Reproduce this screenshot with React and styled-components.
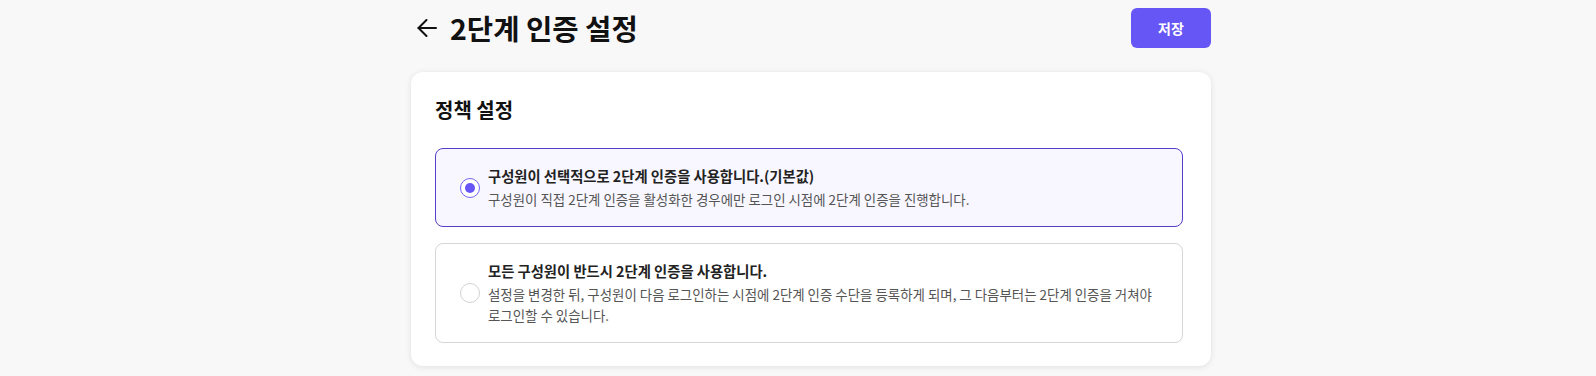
import React, { useState } from "react";
import styled, { createGlobalStyle } from "styled-components";

const Global = createGlobalStyle`
  html, body { margin: 0; padding: 0; background: #f8f8f9; }
  body { font-family: "Noto Sans CJK KR", "Noto Sans", sans-serif; color: #1a1a1a; }
  * { box-sizing: border-box; }
`;

const Page = styled.div`
  display: flex;
  justify-content: center;
  padding: 8px 0 10px 26px;
`;

const Column = styled.div`
  width: 800px;
  display: flex;
  flex-direction: column;
  gap: 24px;
`;

const Header = styled.header`
  height: 40px;
  display: flex;
  align-items: center;
  justify-content: space-between;
`;

const TitleGroup = styled.div`
  display: flex;
  align-items: center;
  gap: 13px;
  padding-left: 6px;
`;

const BackButton = styled.button`
  border: 0;
  background: none;
  padding: 0;
  display: flex;
  cursor: pointer;
  color: #111;
`;

const PageTitle = styled.h1`
  margin: 0;
  font-size: 28.6px;
  font-weight: 700;
  line-height: 40px;
  color: #111;
`;

const SaveButton = styled.button`
  width: 80px;
  height: 40px;
  border: 0;
  border-radius: 6px;
  background: #6656f5;
  color: #fff;
  font-family: inherit;
  font-size: 14px;
  font-weight: 700;
  cursor: pointer;
`;

const Card = styled.section`
  background: #fff;
  border-radius: 12px;
  box-shadow: 0 1px 6px rgba(0, 0, 0, 0.1);
  padding: 24px 28px 23px 24px;
  display: flex;
  flex-direction: column;
  gap: 24px;
`;

const CardTitle = styled.h2`
  margin: 0;
  font-size: 20px;
  font-weight: 700;
  line-height: 28px;
  color: #111;
`;

const Options = styled.div`
  display: flex;
  flex-direction: column;
  gap: 16px;
`;

const Option = styled.label`
  display: flex;
  align-items: center;
  gap: 8px;
  padding: 16px 24px;
  border-radius: 8px;
  border: 1px solid ${(p) => (p.$active ? "#5240c9" : "#d6d6da")};
  background: ${(p) => (p.$active ? "#f8f7ff" : "#fff")};
  cursor: pointer;
`;

const Radio = styled.span`
  flex: none;
  width: 20px;
  height: 20px;
  border-radius: 50%;
  border: 1.5px solid ${(p) => (p.$active ? "#7464f6" : "#d2d2d6")};
  background: #fff;
  display: flex;
  align-items: center;
  justify-content: center;
  &::after {
    content: "";
    width: 10px;
    height: 10px;
    border-radius: 50%;
    background: ${(p) => (p.$active ? "#6656f5" : "transparent")};
  }
`;

const OptionText = styled.div`
  display: flex;
  flex-direction: column;
  gap: 2px;
  min-width: 0;
`;

const OptionTitle = styled.div`
  font-size: 14.3px;
  font-weight: 700;
  line-height: 22px;
  color: #222;
`;

const OptionDesc = styled.div`
  font-size: 13.45px;
  line-height: 21px;
  color: #555;
`;

const ArrowIcon = () => (
  <svg width="20" height="18" viewBox="0 0 20 18" fill="none" stroke="currentColor" strokeWidth="2" strokeLinecap="round" strokeLinejoin="round">
    <path d="M19 9H1.5" />
    <path d="M9.5 1L1.5 9l8 8" />
  </svg>
);

const options = [
  {
    title: "구성원이 선택적으로 2단계 인증을 사용합니다.(기본값)",
    desc: "구성원이 직접 2단계 인증을 활성화한 경우에만 로그인 시점에 2단계 인증을 진행합니다.",
  },
  {
    title: "모든 구성원이 반드시 2단계 인증을 사용합니다.",
    desc: "설정을 변경한 뒤, 구성원이 다음 로그인하는 시점에 2단계 인증 수단을 등록하게 되며, 그 다음부터는 2단계 인증을 거쳐야 로그인할 수 있습니다.",
  },
];

export default function App() {
  const [selected, setSelected] = useState(0);
  return (
    <>
      <Global />
      <Page>
        <Column>
          <Header>
            <TitleGroup>
              <BackButton aria-label="뒤로">
                <ArrowIcon />
              </BackButton>
              <PageTitle>2단계 인증 설정</PageTitle>
            </TitleGroup>
            <SaveButton>저장</SaveButton>
          </Header>
          <Card>
            <CardTitle>정책 설정</CardTitle>
            <Options>
              {options.map((o, i) => (
                <Option key={i} $active={selected === i} onClick={() => setSelected(i)}>
                  <Radio $active={selected === i} />
                  <OptionText>
                    <OptionTitle>{o.title}</OptionTitle>
                    <OptionDesc>{o.desc}</OptionDesc>
                  </OptionText>
                </Option>
              ))}
            </Options>
          </Card>
        </Column>
      </Page>
    </>
  );
}
